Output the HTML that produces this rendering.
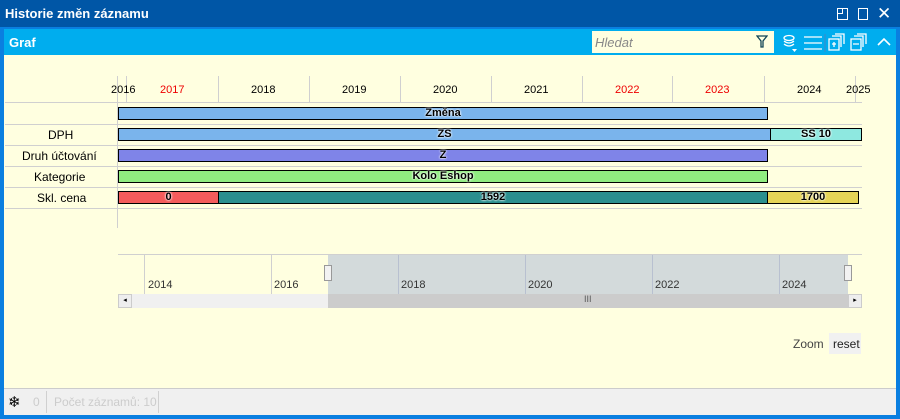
<!DOCTYPE html><html><head><meta charset="utf-8"><style>
*{margin:0;padding:0;box-sizing:border-box}
body{width:900px;height:419px;overflow:hidden;font-family:"Liberation Sans",sans-serif;background:#0a7fe0;position:relative}
.a{position:absolute}
.t{font-size:12px;color:#000;white-space:nowrap}
.bar{position:absolute;height:13px;border:1px solid #000;font-size:11px;font-weight:bold;text-align:center;line-height:11px;color:#000;text-shadow:0 0 2px #fff,0 0 2px #fff}
.hl{position:absolute;height:1px;background:#d0d0d0}
.vl{position:absolute;width:1px;background:#d0d0d0}
</style></head><body>
<div class="a" style="left:0;top:0;width:900px;height:27px;background:#0056a6"></div>
<div class="a t" style="left:5px;top:6px;color:#fff;font-weight:bold;font-size:13px">Historie změn záznamu</div>
<div class="a" style="left:837px;top:8px;width:11px;height:12px;border:1.5px solid #fff"></div>
<div class="a" style="left:837px;top:8px;width:6px;height:6px;border-right:1.5px solid #fff;border-bottom:1.5px solid #fff"></div>
<div class="a" style="left:858px;top:8px;width:10px;height:12px;border:1.5px solid #fff"></div>
<div class="a t" style="left:877px;top:4px;color:#fff;font-size:17px">✕</div>
<div class="a" style="left:4px;top:29px;width:892px;height:386px;background:#ffffe0"></div>
<div class="a" style="left:4px;top:29px;width:892px;height:26px;background:#00adee"></div>
<div class="a t" style="left:9px;top:35px;color:#fff;font-weight:bold;font-size:13px">Graf</div>
<div class="a" style="left:592px;top:31px;width:182px;height:22px;background:#ffffe0"></div>
<div class="a t" style="left:595px;top:35px;color:#888;font-style:italic;font-size:13px">Hledat</div>
<svg class="a" style="left:756px;top:35px" width="12" height="14"><path d="M1 1H11L7 6V12L5 12V6Z" fill="none" stroke="#145" stroke-width="1.3"/></svg>
<svg class="a" style="left:782px;top:33px" width="120" height="20" stroke="#fff" fill="none" stroke-width="1.3">
<ellipse cx="7" cy="5" rx="5" ry="2.5"/><path d="M2 8q5 4 10 0M2 11q5 4 10 0"/><path d="M10 16h5l-2.5 3z" fill="#fff" stroke="none"/>
<path d="M22 4h18M22 10h18M22 16h18"/><path d="M43 1v18" stroke="#3390d0"/>
<rect x="47" y="6" width="10" height="11"/><path d="M50 3h9v11M53 1h9v10M50 11h4M52 9v5"/>
<rect x="69" y="6" width="10" height="11"/><path d="M72 3h9v11M75 1h9v10M71 11h6"/>
<path d="M96 12l6-6 6 6" stroke-width="1.6"/></svg>
<div class="vl" style="left:117px;top:76px;height:26px"></div>
<div class="vl" style="left:126px;top:76px;height:26px"></div>
<div class="vl" style="left:218px;top:76px;height:26px"></div>
<div class="vl" style="left:309px;top:76px;height:26px"></div>
<div class="vl" style="left:400px;top:76px;height:26px"></div>
<div class="vl" style="left:491px;top:76px;height:26px"></div>
<div class="vl" style="left:582px;top:76px;height:26px"></div>
<div class="vl" style="left:672px;top:76px;height:26px"></div>
<div class="vl" style="left:764px;top:76px;height:26px"></div>
<div class="vl" style="left:855px;top:76px;height:26px"></div>
<div class="a t" style="left:111px;top:84px;font-size:11px">2016</div>
<div class="a t" style="left:160px;top:84px;font-size:11px;color:#e00">2017</div>
<div class="a t" style="left:251px;top:84px;font-size:11px">2018</div>
<div class="a t" style="left:342px;top:84px;font-size:11px">2019</div>
<div class="a t" style="left:433px;top:84px;font-size:11px">2020</div>
<div class="a t" style="left:524px;top:84px;font-size:11px">2021</div>
<div class="a t" style="left:615px;top:84px;font-size:11px;color:#e00">2022</div>
<div class="a t" style="left:705px;top:84px;font-size:11px;color:#e00">2023</div>
<div class="a t" style="left:797px;top:84px;font-size:11px">2024</div>
<div class="a t" style="left:846px;top:84px;font-size:11px">2025</div>
<div class="hl" style="left:5px;top:102px;width:857px"></div>
<div class="hl" style="left:5px;top:124px;width:857px"></div>
<div class="hl" style="left:5px;top:145px;width:857px"></div>
<div class="hl" style="left:5px;top:166px;width:857px"></div>
<div class="hl" style="left:5px;top:187px;width:857px"></div>
<div class="hl" style="left:5px;top:208px;width:857px"></div>
<div class="vl" style="left:117px;top:102px;height:126px"></div>
<div class="a t" style="left:48px;top:128px">DPH</div>
<div class="a t" style="left:22px;top:149px">Druh účtování</div>
<div class="a t" style="left:34px;top:170px">Kategorie</div>
<div class="a t" style="left:37px;top:191px">Skl. cena</div>
<div class="bar" style="left:118px;top:107px;width:650px;background:#7ab4ec">Změna</div>
<div class="bar" style="left:118px;top:128px;width:653px;background:#7ab4ec">ZS</div>
<div class="bar" style="left:770px;top:128px;width:92px;background:#8ee8e0">SS 10</div>
<div class="bar" style="left:118px;top:149px;width:650px;background:#7f84e8">Z</div>
<div class="bar" style="left:118px;top:170px;width:650px;background:#90ec80">Kolo Eshop</div>
<div class="bar" style="left:118px;top:191px;width:101px;background:#f45c5c">0</div>
<div class="bar" style="left:218px;top:191px;width:550px;background:#2b8f8f">1592</div>
<div class="bar" style="left:767px;top:191px;width:92px;background:#e5d457">1700</div>
<div class="hl" style="left:118px;top:254px;width:744px"></div>
<div class="a" style="left:328px;top:255px;width:520px;height:39px;background:#d3dadb"></div>
<div class="vl" style="left:144px;top:255px;height:39px"></div>
<div class="vl" style="left:271px;top:255px;height:39px"></div>
<div class="vl" style="left:398px;top:255px;height:39px;background:#b8c0d0"></div>
<div class="vl" style="left:525px;top:255px;height:39px;background:#b8c0d0"></div>
<div class="vl" style="left:652px;top:255px;height:39px;background:#b8c0d0"></div>
<div class="vl" style="left:779px;top:255px;height:39px;background:#b8c0d0"></div>
<div class="a t" style="left:148px;top:279px;font-size:11px;color:#333">2014</div>
<div class="a t" style="left:274px;top:279px;font-size:11px;color:#333">2016</div>
<div class="a t" style="left:401px;top:279px;font-size:11px;color:#333">2018</div>
<div class="a t" style="left:528px;top:279px;font-size:11px;color:#333">2020</div>
<div class="a t" style="left:655px;top:279px;font-size:11px;color:#333">2022</div>
<div class="a t" style="left:782px;top:279px;font-size:11px;color:#333">2024</div>
<div class="a" style="left:324px;top:265px;width:8px;height:16px;background:#f2f2f2;border:1px solid #999"></div>
<div class="a" style="left:844px;top:265px;width:8px;height:16px;background:#f2f2f2;border:1px solid #999"></div>
<div class="a" style="left:118px;top:294px;width:744px;height:14px;background:#f0f0f0"></div>
<div class="a" style="left:328px;top:294px;width:520px;height:14px;background:#cccccc"></div>
<div class="a t" style="left:584px;top:294px;font-size:9px;color:#555">III</div>
<div class="a" style="left:118px;top:294px;width:14px;height:14px;border:1px solid #ccc;background:#eee;font-size:7px;text-align:center;line-height:12px">◂</div>
<div class="a" style="left:848px;top:294px;width:14px;height:14px;border:1px solid #ccc;background:#eee;font-size:7px;text-align:center;line-height:12px">▸</div>
<div class="a t" style="left:793px;top:337px;font-size:12px;color:#444">Zoom</div>
<div class="a" style="left:829px;top:333px;width:32px;height:21px;background:#f1f1f1"></div>
<div class="a t" style="left:833px;top:337px;font-size:12px;color:#222">reset</div>
<div class="a" style="left:4px;top:388px;width:892px;height:27px;background:#f0f0f0;border-top:1px solid #ccc"></div>
<div class="a t" style="left:8px;top:393px;font-size:15px">❄</div>
<div class="a t" style="left:33px;top:395px;font-size:12px;color:#ccc">0</div>
<div class="vl" style="left:46px;top:391px;height:22px"></div>
<div class="a t" style="left:54px;top:395px;font-size:12px;color:#ccc">Počet záznamů: 10</div>
<div class="vl" style="left:158px;top:391px;height:22px"></div>
</body></html>
